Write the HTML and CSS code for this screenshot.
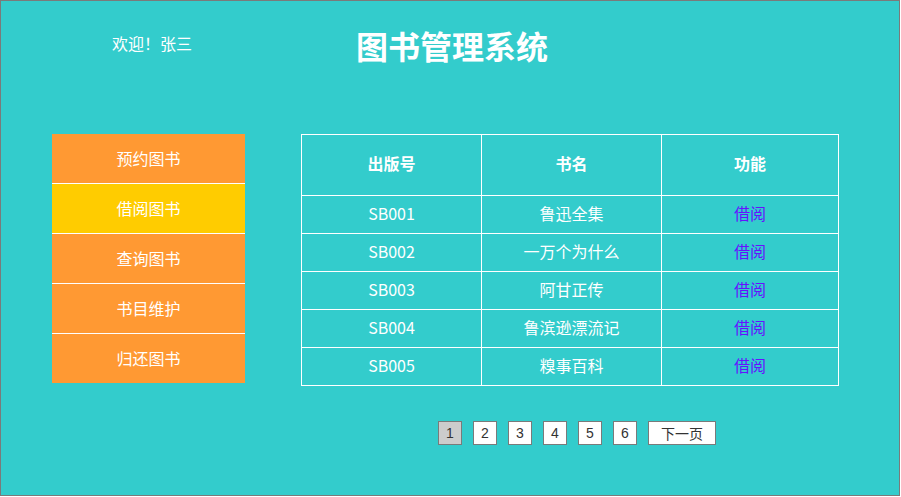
FILE: index.html
```html
<!DOCTYPE html>
<html lang="zh-CN">
<head>
<meta charset="utf-8">
<title>图书管理系统</title>
<link rel="stylesheet" href="styles.css">
</head>
<body>
<div class="page">
  <header class="header">
    <div class="welcome">欢迎！张三</div>
    <h1 class="title">图书管理系统</h1>
  </header>
  <main class="main">
    <nav class="menu">
      <a class="menu-item">预约图书</a>
      <a class="menu-item active">借阅图书</a>
      <a class="menu-item">查询图书</a>
      <a class="menu-item">书目维护</a>
      <a class="menu-item">归还图书</a>
    </nav>
    <div class="content">
      <table class="books">
        <thead>
          <tr><th>出版号</th><th>书名</th><th>功能</th></tr>
        </thead>
        <tbody>
          <tr><td>SB001</td><td>鲁迅全集</td><td><a class="op">借阅</a></td></tr>
          <tr><td>SB002</td><td>一万个为什么</td><td><a class="op">借阅</a></td></tr>
          <tr><td>SB003</td><td>阿甘正传</td><td><a class="op">借阅</a></td></tr>
          <tr><td>SB004</td><td>鲁滨逊漂流记</td><td><a class="op">借阅</a></td></tr>
          <tr><td>SB005</td><td>糗事百科</td><td><a class="op">借阅</a></td></tr>
        </tbody>
      </table>
    </div>
  </main>
  <div class="pager">
    <span class="pg current">1</span>
    <span class="pg">2</span>
    <span class="pg">3</span>
    <span class="pg">4</span>
    <span class="pg">5</span>
    <span class="pg">6</span>
    <span class="pg next">下一页</span>
  </div>
</div>
</body>
</html>
```
FILE: styles.css
```css
* { box-sizing: border-box; }
html, body { margin: 0; padding: 0; }
body {
  font-family: "Noto Sans CJK SC", "Noto Sans", sans-serif;
  background: #ffffff;
}
.page {
  width: 900px;
  height: 496px;
  background: #33cccc;
  border: 1px solid #7a7a7a;
  color: #ffffff;
}
.header {
  display: flex;
  align-items: center;
  height: 93px;
  padding-left: 111px;
}
.welcome {
  font-size: 16px;
  width: 80px;
  line-height: 20px;
  margin-bottom: 10px;
}
.title {
  margin: 0 0 6px 164px;
  font-size: 32px;
  font-weight: bold;
  line-height: 36px;
}
.main {
  display: flex;
  align-items: flex-start;
  padding-left: 51px;
  margin-top: 40px;
}
.menu {
  display: flex;
  flex-direction: column;
  width: 193px;
}
.menu-item {
  display: flex;
  align-items: center;
  justify-content: center;
  height: 50px;
  background: #ff9933;
  color: #ffffff;
  font-size: 16px;
  border-top: 1px solid #ffffff;
  padding-bottom: 2px;
}
.menu-item:first-child { border-top: none; height: 49px; }
.menu-item.active { background: #ffcc00; }
.content {
  margin-left: 56px;
}
.books {
  width: 538px;
  border-collapse: collapse;
  font-size: 16px;
  color: #ffffff;
  table-layout: fixed;
}
.books th, .books td {
  border: 1px solid #ffffff;
  text-align: center;
  padding: 0 0 4px 0;
  font-weight: normal;
}
.books th:nth-child(1), .books th:nth-child(2) { width: 180px; }
.books th {
  height: 61px;
  font-weight: bold;
}
.books td { height: 38px; }
.op { color: #6611ff; }
.pager {
  display: flex;
  gap: 11px;
  padding-left: 437px;
  margin-top: 35px;
}
.pg {
  width: 24px;
  height: 24px;
  border: 1px solid #7a7a7a;
  background: #ffffff;
  color: #333333;
  font-family: "Liberation Sans", "Noto Sans CJK SC", sans-serif;
  font-size: 14px;
  display: flex;
  align-items: center;
  justify-content: center;
}
.pg.current { background: #cccccc; }
.pg.next { width: 68px; }
```
